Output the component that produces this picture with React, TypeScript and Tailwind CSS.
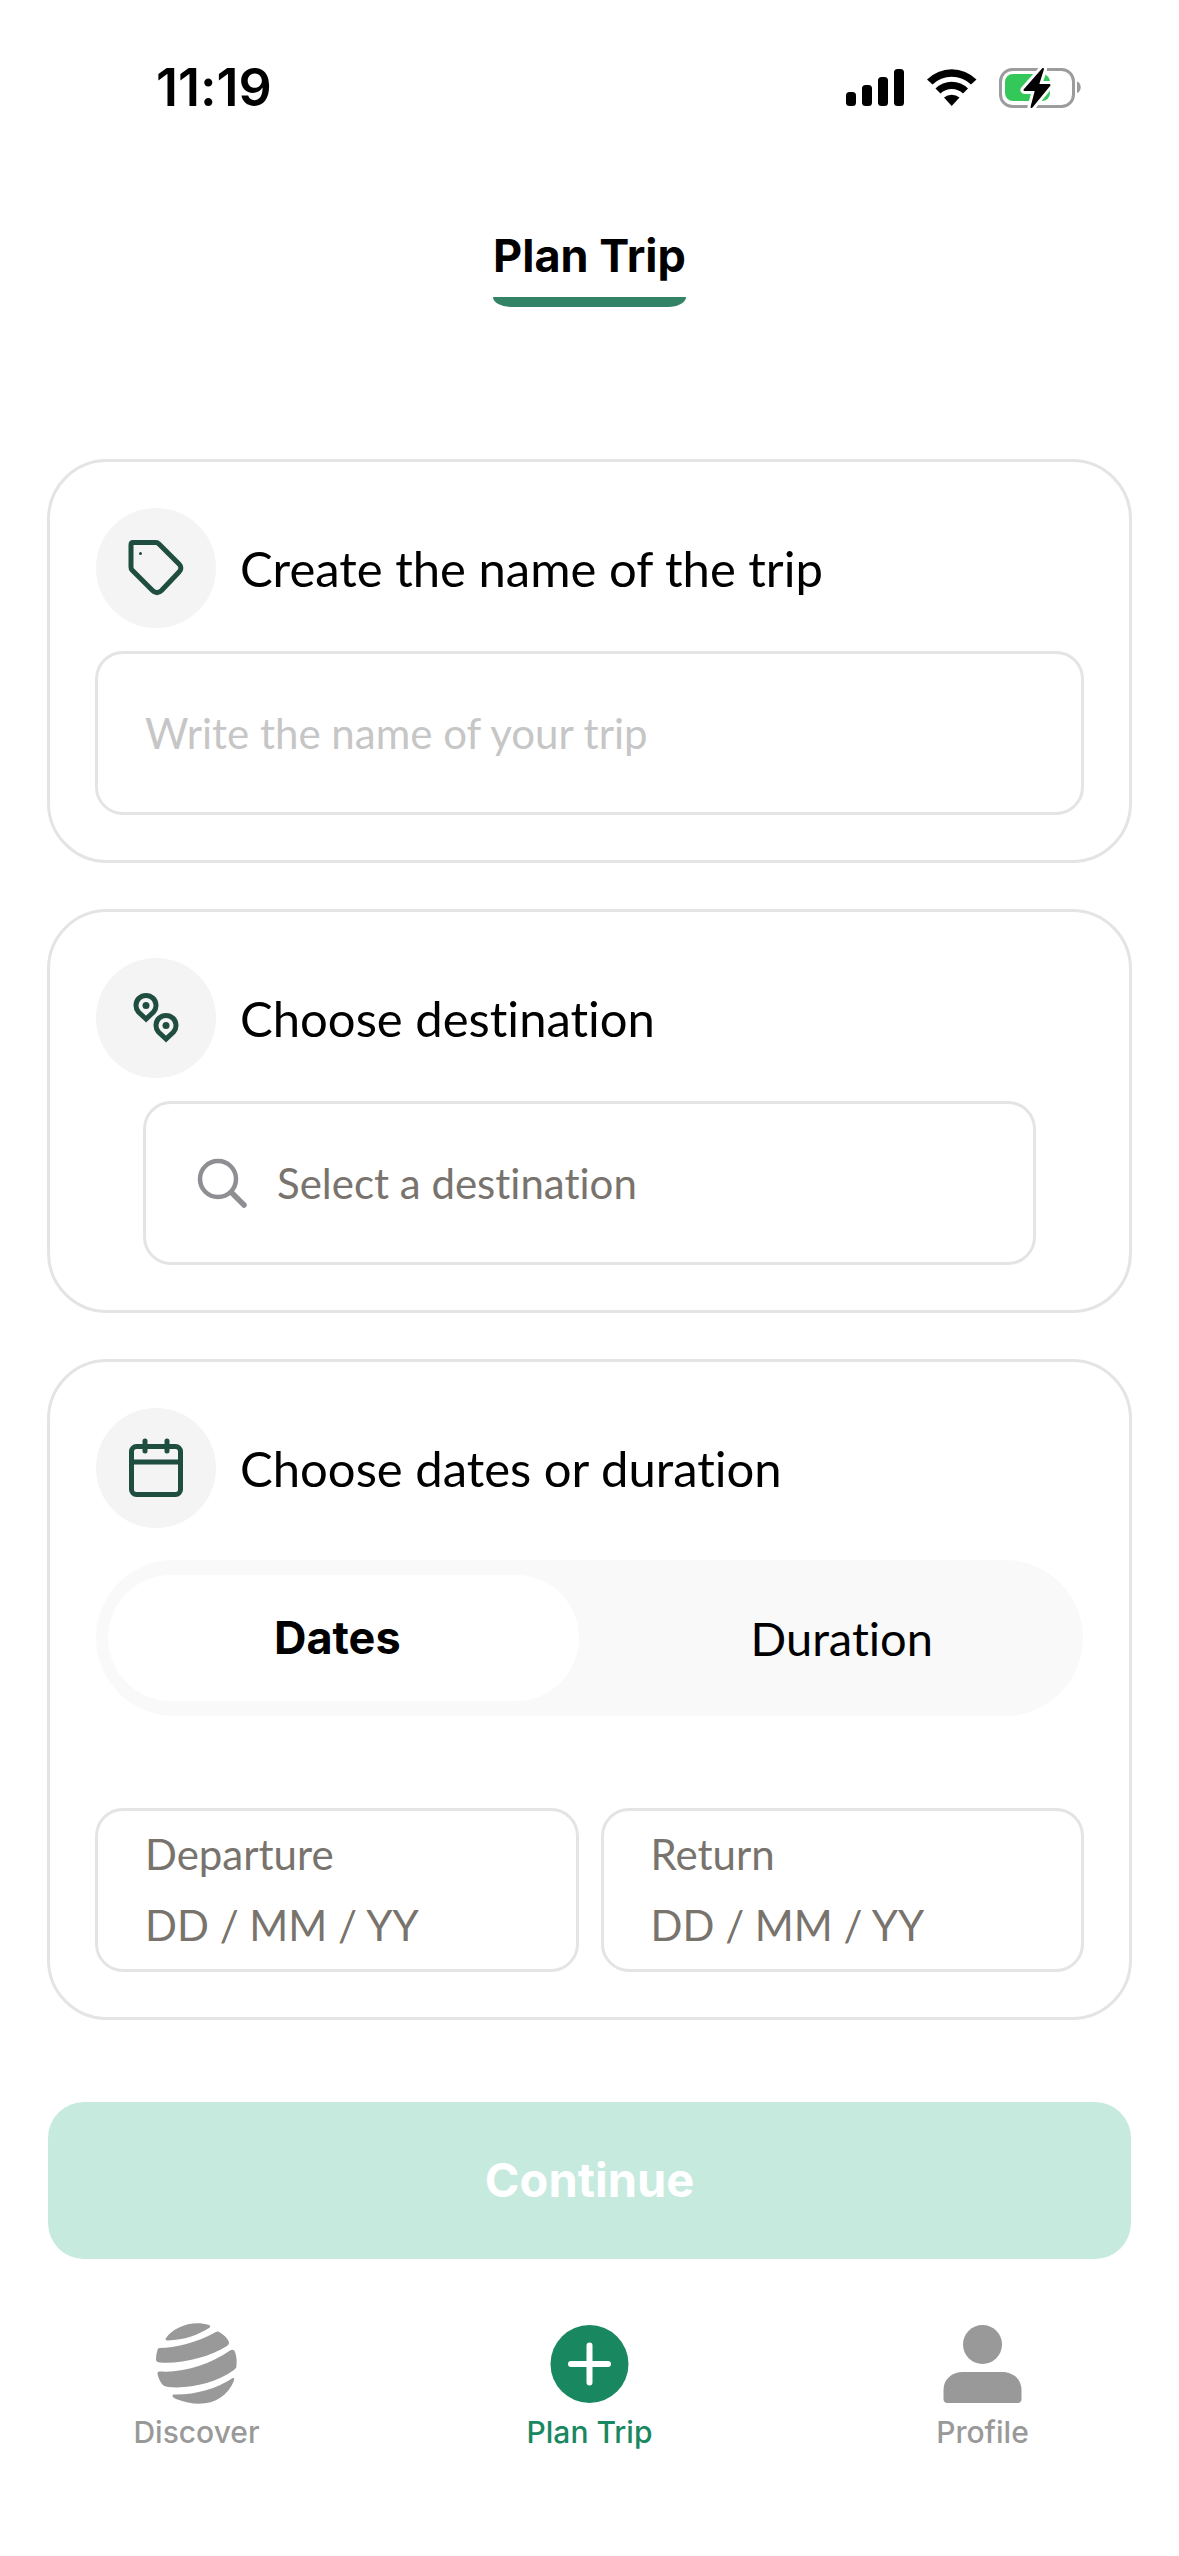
import { useState } from "react"

const Tag = () => (
  <svg className="size-[60px]" viewBox="0 0 60 60" fill="none" stroke="#1f4d3f" strokeWidth="5" strokeLinejoin="round">
    <path d="M7 4.500H30C31 4.500 32 5 33 6L53 26C55.500 28.500 55.500 31.500 53 34L35.500 52.500C32.500 55.500 29.500 55.500 26.500 52.500L6 32C5 31 5 30 5 29V7C5 5.500 5.500 4.500 7 4.500Z" />
    <circle cx="14.500" cy="15.500" r="1.500" fill="#1f4d3f" stroke="none" />
  </svg>
)

const Pins = () => (
  <svg className="size-[60px]" viewBox="0 0 60 60" fill="none" stroke="#1f4d3f" strokeWidth="5">
    <path d="M20 31L12.500 24A10 10 0 1 1 27.500 24Z" />
    <circle cx="20" cy="17.500" r="3.500" fill="#1f4d3f" stroke="none" />
    <path d="M40 51L32.500 44A10 10 0 1 1 47.500 44Z" />
    <circle cx="40" cy="37.500" r="3.500" fill="#1f4d3f" stroke="none" />
  </svg>
)

const Calendar = () => (
  <svg className="size-[60px]" viewBox="0 0 60 60" fill="none" stroke="#1f4d3f" strokeWidth="5" strokeLinecap="round">
    <rect x="5.500" y="8.500" width="49" height="48" rx="5" />
    <path d="M6 24H54M19 3V13M41 3V13" />
  </svg>
)

const Search = () => (
  <svg className="size-[52px]" viewBox="0 0 52 52" fill="none" stroke="#8e8e93" strokeWidth="4.500" strokeLinecap="round">
    <circle cx="21" cy="22" r="18" />
    <path d="M35 36L47 48" strokeWidth="5.500" />
  </svg>
)

const StatusIcons = () => (
  <svg className="h-[42px] w-[238px]" viewBox="0 0 238 42" aria-hidden="true">
    <rect x="0" y="25" width="10" height="14" rx="3.500" />
    <rect x="16" y="18" width="10" height="21" rx="3.500" />
    <rect x="32" y="10" width="10" height="29" rx="3.500" />
    <rect x="48" y="2" width="10" height="37" rx="3.500" />
    <path d="M81 12.500A35 35 0 0 1 130.500 12.500L125 17.500A28 28 0 0 0 86.500 17.500Z" />
    <path d="M89.500 21.500A23 23 0 0 1 122 21.500L117 26.500A16 16 0 0 0 94.500 26.500Z" />
    <path d="M98 30.500A12 12 0 0 1 113.500 30.500L105.700 39Z" />
    <rect x="154.500" y="2.500" width="73" height="37" rx="12" fill="none" stroke="#9c9c9f" strokeWidth="3" />
    <path d="M231 14.500C236 16 236 24.500 231 26Z" fill="#9c9c9f" />
    <rect x="159" y="7" width="45" height="27" rx="8" fill="#34c759" />
    <path d="M197 2L178.500 23H190L185.500 40L203.500 18H192Z" stroke="#fff" strokeWidth="8" strokeLinejoin="round" />
    <path d="M197 2L178.500 23H190L185.500 40L203.500 18H192Z" strokeWidth="2" stroke="#000" strokeLinejoin="round" />
  </svg>
)

const Globe = () => (
  <svg className="size-[81px]" viewBox="0 0 81 81" fill="#999">
    <path d="M10 15C18 4 36 -3 53 2C55 3 54.500 4 53 5C42 12 28 17 12 17.500C9.500 17.500 9 16.500 10 15Z" />
    <path d="M4 25C18 25 42 19 58 10C60 8.500 62 8 64 9.500C68 12 71 15 72.500 18C73.500 20 73 21.500 71 23C54 34 26 41 4 39.500C1 39.500 0 38 0 36C0 33 .500 30 1.500 27C2 25.500 2.500 25 4 25Z" />
    <path d="M4 48.500C28 50 55 41 74 27.500C76.500 26 78 26.500 79 29C80.500 33 81 38 80.500 42C80.500 44 80 45.500 78 47C60 60 34 66 12 64C9 63.500 7.500 63 6 61C3.500 57.500 2 54 1.500 51C1.500 49 2 48.500 4 48.500Z" />
    <path d="M18 71.500C39 72 60 66 76 55.500C78 54.500 78.500 55.500 78 57.500C70 78 48 87 20 76C18 75 16.500 74 16.500 73C16.500 72 17 71.500 18 71.500Z" />
  </svg>
)

const Plus = () => (
  <svg className="size-[81px]" viewBox="0 0 81 81">
    <circle cx="40.500" cy="41" r="39" fill="#19875f" />
    <path d="M40.500 22.500V59.500M22 41H59" stroke="#fff" strokeWidth="6" strokeLinecap="round" />
  </svg>
)

const Person = () => (
  <svg className="size-[81px]" viewBox="0 0 81 81" fill="#999">
    <circle cx="40.500" cy="21.500" r="19.500" />
    <path d="M1.500 67C1.500 56 10 49 21 49H60C71 49 79.500 56 79.500 67V76C79.500 78.500 78 80 75.500 80H5.500C3 80 1.500 78.500 1.500 76Z" />
  </svg>
)

const CardHead = ({ icon, text, htmlFor }: any) => (
  <div className="flex items-center gap-6 pl-px">
    <span className="flex size-[120px] items-center justify-center rounded-full bg-[#f4f4f4]">{icon}</span>
    {htmlFor ? (
      <label htmlFor={htmlFor} className="text-[49px] leading-[60px]">{text}</label>
    ) : (
      <h2 className="text-[49px] leading-[60px]">{text}</h2>
    )}
  </div>
)

const DateBox = ({ label, id }: any) => (
  <div className="flex h-[164px] min-w-0 flex-1 flex-col justify-center rounded-[28px] border-3 border-[#e4e4e4] px-[47px] text-[#78736d]">
    <label htmlFor={id} className="text-[42px] leading-[70px]">{label}</label>
    <input id={id} placeholder="DD / MM / YY" className="h-[72px] w-full text-[42px] outline-none placeholder:text-[#78736d]" />
  </div>
)

const card = "rounded-[60px] border-3 border-[#e4e4e4] px-[45px] pt-[46px] pb-[45px]"

const App = () => {
  const [name, setName] = useState("")
  const [tab, setTab] = useState("dates")

  const on = "rounded-full bg-white font-['Inter',sans-serif] text-[45px] font-bold"
  const off = "rounded-full text-[47px]"

  return (
    <div className="flex min-h-screen flex-col bg-white font-['Lato',sans-serif] text-black [font-variant-ligatures:none]">
      <header className="flex items-center justify-between pt-[58px] pr-[95px] pl-[156px] font-['Inter',sans-serif]">
        <span className="text-[52px] leading-[60px] font-semibold">11:19</span>
        <StatusIcons />
      </header>

      <div className="mt-[106px] flex justify-center">
        <h1 className="font-['Inter',sans-serif] text-[45px] leading-[64px] font-bold">
          Plan Trip
          <span className="mt-[9px] block h-[10px] bg-[#338367] [border-radius:0_0_18px_18px/0_0_10px_10px]" />
        </h1>
      </div>

      <main className="mt-[152px] flex flex-col gap-[46px] px-[47px]">
        <section className={card}>
          <CardHead icon={<Tag />} text="Create the name of the trip" htmlFor="name" />
          <input
            id="name"
            value={name}
            onChange={(e) => setName(e.target.value)}
            placeholder="Write the name of your trip"
            className="mt-[23px] h-[164px] w-full rounded-[28px] border-3 border-[#e4e4e4] px-[47px] text-[42px] outline-none placeholder:text-[#c6c6c6]"
          />
        </section>

        <section className={card}>
          <CardHead icon={<Pins />} text="Choose destination" htmlFor="destination" />
          <div className="mx-12 mt-[23px] flex h-[164px] items-center gap-[28px] rounded-[28px] border-3 border-[#e4e4e4] px-[51px]">
            <Search />
            <input id="destination" placeholder="Select a destination" className="min-w-0 flex-1 text-[42px] outline-none placeholder:text-[#78736d]" />
          </div>
        </section>

        <section className={card}>
          <CardHead icon={<Calendar />} text="Choose dates or duration" />
          <div className="mx-px mt-8 grid h-[156px] grid-cols-2 gap-[22px] rounded-full bg-[#f9f9f9] px-3 py-[15px]">
            <button onClick={() => setTab("dates")} className={`pr-3 ${tab === "dates" ? on : off}`}>Dates</button>
            <button onClick={() => setTab("duration")} className={`pl-3 ${tab === "duration" ? on : off}`}>Duration</button>
          </div>
          <div className="mt-[92px] flex gap-[22px]">
            <DateBox label="Departure" id="departure" />
            <DateBox label="Return" id="return" />
          </div>
        </section>
      </main>

      <div className="mt-[82px] px-12">
        <button className="h-[157px] w-full rounded-[36px] bg-[#c7eadf] font-['Inter',sans-serif] text-[47px] font-bold text-white">Continue</button>
      </div>

      <nav className="mt-16 grid grid-cols-3 font-['Inter',sans-serif] text-[30px] leading-[36px] font-medium text-[#999]">
        <a href="#discover" className="flex flex-col items-center gap-[10px]"><Globe />Discover</a>
        <a href="#plan" className="flex flex-col items-center gap-[10px] text-[#19875f]"><Plus />Plan Trip</a>
        <a href="#profile" className="flex flex-col items-center gap-[10px]"><Person />Profile</a>
      </nav>
    </div>
  )
}

export default App
